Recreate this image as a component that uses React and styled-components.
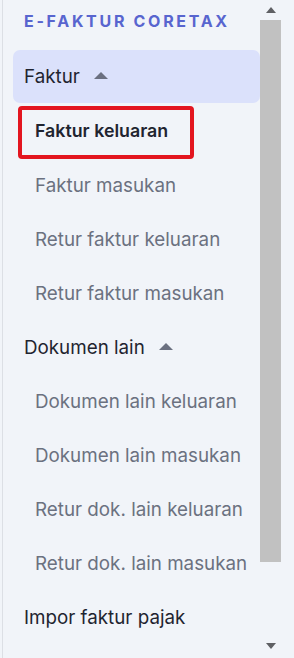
import React from 'react'
import styled, { createGlobalStyle } from 'styled-components'

const Global = createGlobalStyle`
  html, body { margin: 0; padding: 0; background: #f1f4f9; }
  body { font-family: Inter, "Noto Sans", sans-serif; }
`

const Frame = styled.div`
  width: 294px;
  height: 658px;
  overflow: hidden;
  display: flex;
  background: #f1f4f9;
  padding-left: 2px;
  box-sizing: border-box;
`

const Nav = styled.nav`
  flex: 0 0 258px;
  min-width: 0;
  overflow: hidden;
  border-left: 1px solid #dcdfe5;
  padding: 12px 0 0 10px;
  box-sizing: border-box;
`

const Title = styled.div`
  height: 18px;
  line-height: 18px;
  padding-left: 11px;
  font-size: 16px;
  font-weight: 700;
  letter-spacing: 2.7px;
  color: #5865cf;
  margin-bottom: 20px;
  white-space: nowrap;
`

const Group = styled.div`
  display: flex;
  align-items: center;
  gap: 14px;
  height: ${p => (p.$open ? 53 : 54)}px;
  padding-left: 11px;
  margin-bottom: ${p => (p.$open ? 1 : 0)}px;
  border-radius: 7px;
  background: ${p => (p.$open ? '#dbe1fb' : 'transparent')};
  font-size: 18.8px;
  color: #1f2430;
`

const Caret = styled.span`
  width: 0;
  height: 0;
  border-left: 7.5px solid transparent;
  border-right: 7.5px solid transparent;
  border-bottom: 7px solid #6b7080;
  margin-top: -2px;
`

const Item = styled.div`
  height: 54px;
  display: flex;
  align-items: center;
  padding-left: 22px;
  font-size: 18.8px;
  color: #6b7180;
  white-space: nowrap;
`

const Active = styled.div`
  height: 54px;
  display: flex;
  align-items: center;
  padding: 3px 0 0 5px;
  box-sizing: border-box;
`

const ActiveBox = styled.div`
  width: 176px;
  height: 53px;
  box-sizing: border-box;
  border: 4px solid #e3151f;
  border-radius: 4px;
  display: flex;
  align-items: center;
  padding: 0 0 4px 13px;
  font-size: 17.8px;
  font-weight: 600;
  color: #1f2430;
  white-space: nowrap;
`

const Scroll = styled.div`
  flex: 0 0 21px;
  display: flex;
  flex-direction: column;
  align-items: center;
`

const Arrow = styled.div`
  height: ${p => p.$h}px;
  display: flex;
  align-items: center;
  justify-content: center;
  flex: 0 0 auto;
  &::after {
    content: '';
    width: 0;
    height: 0;
    border-left: 5px solid transparent;
    border-right: 5px solid transparent;
    ${p => (p.$down ? 'border-top' : 'border-bottom')}: 6px solid #5f6064;
  }
`

const Track = styled.div`
  flex: 1;
  width: 100%;
  display: flex;
  flex-direction: column;
`

const Thumb = styled.div`
  width: 100%;
  height: 542px;
  background: #c1c1c1;
`

const faktur = ['Faktur masukan', 'Retur faktur keluaran', 'Retur faktur masukan']
const dokumen = [
  'Dokumen lain keluaran',
  'Dokumen lain masukan',
  'Retur dok. lain keluaran',
  'Retur dok. lain masukan',
]

export default function App() {
  return (
    <>
      <Global />
      <Frame>
        <Nav>
          <Title>E-FAKTUR CORETAX</Title>
          <Group $open>
            Faktur <Caret />
          </Group>
          <Active>
            <ActiveBox>Faktur keluaran</ActiveBox>
          </Active>
          {faktur.map(t => (
            <Item key={t}>{t}</Item>
          ))}
          <Group>
            Dokumen lain <Caret />
          </Group>
          {dokumen.map(t => (
            <Item key={t}>{t}</Item>
          ))}
          <Group>Impor faktur pajak</Group>
        </Nav>
        <Scroll>
          <Arrow $h={20} />
          <Track>
            <Thumb />
          </Track>
          <Arrow $h={24} $down />
        </Scroll>
      </Frame>
    </>
  )
}
